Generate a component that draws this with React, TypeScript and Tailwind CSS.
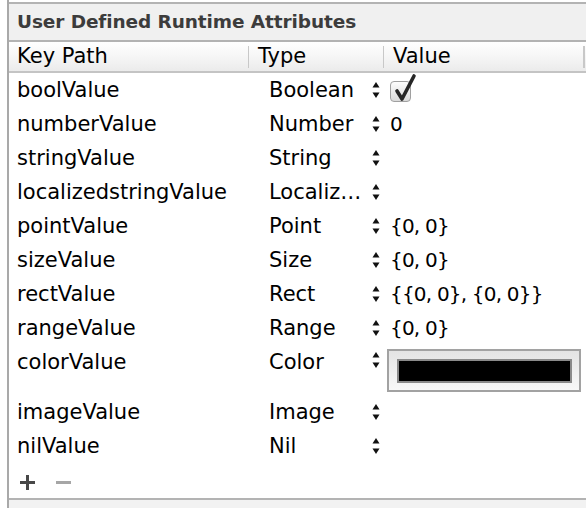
import React from "react";

type Row = { key: string; type: string; value?: React.ReactNode; tall?: boolean };

function Stepper() {
  return (
    <svg width="8" height="18" viewBox="0 0 8 18" className="shrink-0">
      <polygon points="4,1 7.5,6.5 0.5,6.5" fill="#111" />
      <polygon points="0.5,11.5 7.5,11.5 4,17" fill="#111" />
    </svg>
  );
}

function Checkbox() {
  return (
    <div className="relative w-[21px] h-[21px] mt-[3px] rounded-[4px] border border-[#a0a0a0] bg-gradient-to-b from-[#fdfdfd] to-[#dadada]">
      <svg width="24" height="30" viewBox="0 0 24 30" className="absolute left-[2px] top-[-9px]">
        <path d="M4 18 L9 26 L21 3" fill="none" stroke="#262626" strokeWidth="3.6" strokeLinecap="round" strokeLinejoin="round" />
      </svg>
    </div>
  );
}

function ColorWell() {
  return (
    <div className="w-[194px] h-[43px] border-2 border-[#a2a2a2] bg-gradient-to-b from-[#e4e4e4] to-[#f8f8f8] flex items-center justify-center">
      <div className="w-[175px] h-[24px] bg-black border-2 border-[#8a8a8a]" />
    </div>
  );
}

const ROWS: Row[] = [
  { key: "boolValue", type: "Boolean", value: <Checkbox /> },
  { key: "numberValue", type: "Number", value: "0" },
  { key: "stringValue", type: "String" },
  { key: "localizedstringValue", type: "Localiz…" },
  { key: "pointValue", type: "Point", value: "{0, 0}" },
  { key: "sizeValue", type: "Size", value: "{0, 0}" },
  { key: "rectValue", type: "Rect", value: "{{0, 0}, {0, 0}}" },
  { key: "rangeValue", type: "Range", value: "{0, 0}" },
  { key: "colorValue", type: "Color", value: <ColorWell />, tall: true },
  { key: "imageValue", type: "Image" },
  { key: "nilValue", type: "Nil" },
];

export default function App() {
  return (
    <div className="w-[586px] h-[508px] bg-white overflow-hidden pl-[7px] font-['Lucida_Grande','DejaVu_Sans',sans-serif] text-[21px] text-black">
      <div className="h-full border-l-2 border-[#a9a9a9] pt-[2px] flex flex-col">
        {/* Section title */}
        <div className="h-[40px] border-y-2 border-[#b3b3b3] bg-[#f0f0f0] flex items-center pl-[8px]">
          <span className="font-bold text-[#3c3c3c] text-[18.5px] tracking-[-0.1px]">User Defined Runtime Attributes</span>
        </div>

        {/* Column headers */}
        <div className="h-[31px] border-b-2 border-[#c4c4c4] bg-gradient-to-b from-white via-[#f6f6f6] to-[#ebebeb] flex items-center">
          <div className="w-[239px] pl-[8px] leading-none">Key Path</div>
          <div className="w-px h-[22px] bg-[#c8c8c8]" />
          <div className="w-[134px] pl-[9px] leading-none">Type</div>
          <div className="w-px h-[22px] bg-[#c8c8c8]" />
          <div className="flex-1 pl-[9px] leading-none">Value</div>
          <div className="w-[2px] h-[22px] bg-[#c8c8c8] mr-[1px]" />
        </div>

        {/* Rows */}
        <div className="flex flex-col">
          {ROWS.map((r) =>
            r.tall ? (
              <div key={r.key} className="flex h-[50px] items-start pt-[4px]">
                <div className="w-[260px] pl-[8px] mt-[3px] whitespace-nowrap leading-none">{r.key}</div>
                <div className="w-[103px] mt-[3px] whitespace-nowrap leading-none">{r.type}</div>
                <div className="mt-[2px]">
                  <Stepper />
                </div>
                <div className="pl-[7px]">{r.value}</div>
              </div>
            ) : (
              <div key={r.key} className="flex h-[34px] items-center">
                <div className="w-[260px] pl-[8px] whitespace-nowrap leading-none">{r.key}</div>
                <div className="w-[103px] whitespace-nowrap leading-none">{r.type}</div>
                <Stepper />
                <div className="pl-[10px] leading-none whitespace-nowrap text-[20px] tracking-[-0.8px]">{r.value}</div>
              </div>
            )
          )}
        </div>

        {/* Add / remove */}
        <div className="h-[35px] flex items-center pl-[11px] pt-[3px] gap-[21px]">
          <svg width="15" height="15" viewBox="0 0 15 15">
            <rect x="6" y="0" width="3" height="15" fill="#484848" />
            <rect x="0" y="6" width="15" height="3" fill="#484848" />
          </svg>
          <svg width="15" height="15" viewBox="0 0 15 15">
            <rect x="0" y="6" width="15" height="3" fill="#a6a6a6" />
          </svg>
        </div>

        <div className="flex-1 border-t-2 border-[#b3b3b3] bg-[#f2f2f2]" />
      </div>
    </div>
  );
}
